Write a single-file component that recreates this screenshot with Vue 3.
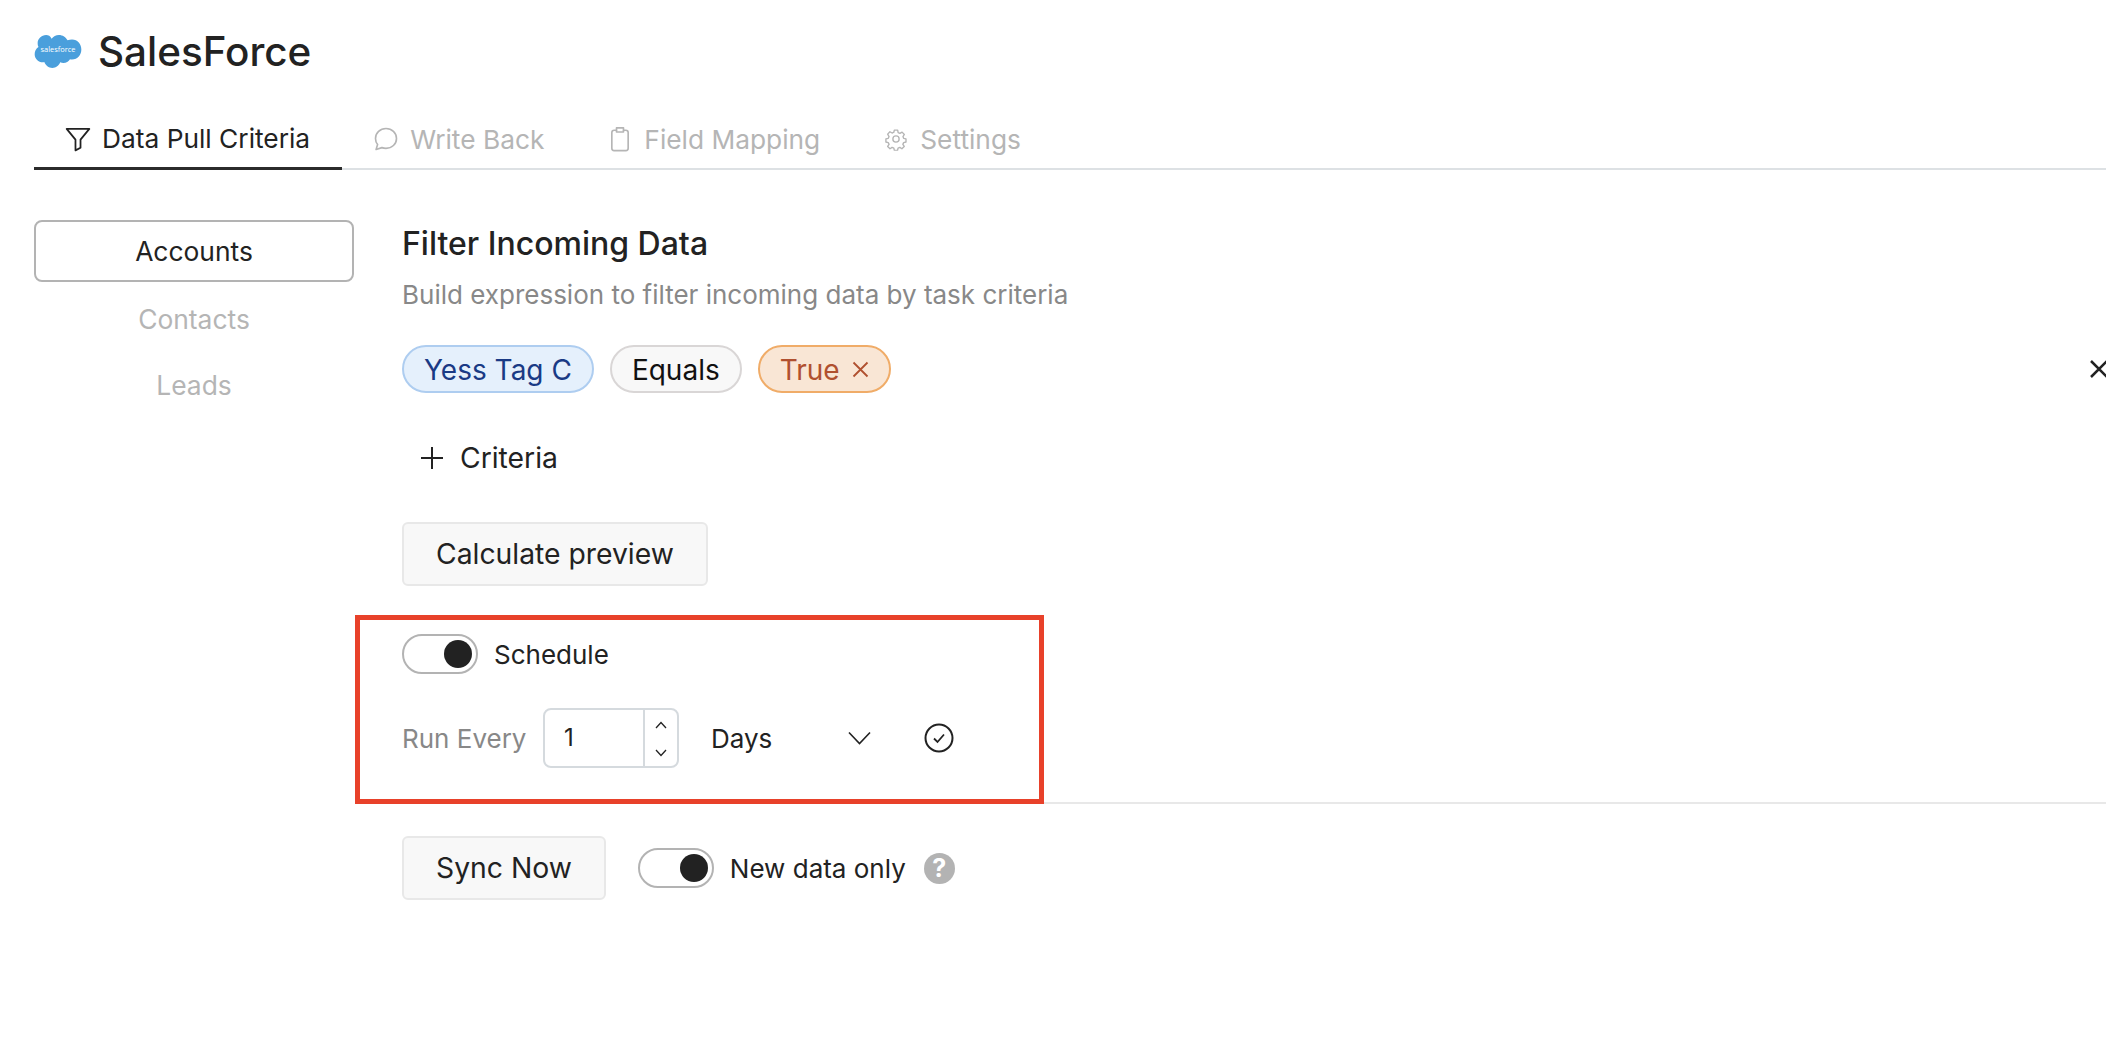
<template>
  <div class="page">
    <header class="header">
      <svg class="logo" viewBox="3.500 1 45 33" width="48" height="35">
        <path fill="#4a9fdc" d="M20 5.500C21.600 3.400 24 2 26.800 2c3.600 0 6.700 2.100 8.200 5 1.300-.6 2.700-.9 4.200-.9C44.600 6.100 48 10.500 48 15.500S44.600 25 39.200 25c-.7 0-1.300-.1-1.900-.2-1.200 2.200-3.600 3.600-6.200 3.600-1.100 0-2.100-.2-3-.7-1.200 3-4 5.300-7.400 5.300-3.500 0-6.500-2.300-7.600-5.500-.5.1-1 .2-1.500.2C7.600 27.700 4 24.300 4 20c0-2.800 1.400-5.300 3.600-6.700C7 12.200 6.800 11 6.800 9.800 6.800 5.500 10.400 2 14.800 2c2.100 0 4 .9 5.200 3.500z"/>
        <text x="26" y="18" text-anchor="middle" class="logo-text">salesforce</text>
      </svg>
      <h1>SalesForce</h1>
    </header>

    <nav class="tabs">
      <div v-for="t in tabs" :key="t.name" class="tab" :class="{ active: t.active }">
        <svg width="28" height="28" viewBox="0 0 24 24" fill="none" stroke="currentColor" stroke-width="1.400" stroke-linejoin="round" stroke-linecap="round">
          <path v-for="d in t.icon" :key="d" :d="d" />
        </svg>
        <span>{{ t.name }}</span>
      </div>
    </nav>

    <div class="body">
      <aside class="side">
        <div class="side-item selected">Accounts</div>
        <div class="side-item">Contacts</div>
        <div class="side-item">Leads</div>
      </aside>

      <main class="main">
        <h2>Filter Incoming Data</h2>
        <p class="sub">Build expression to filter incoming data by task criteria</p>

        <div class="chips">
          <span class="chip blue">Yess Tag C</span>
          <span class="chip grey">Equals</span>
          <span class="chip orange">True
            <svg width="17" height="17" viewBox="0 0 17 17" fill="none" stroke="currentColor" stroke-width="1.800"><path d="M1.500 1.500l14 14M15.500 1.500l-14 14" /></svg>
          </span>
          <svg class="row-close" width="18" height="18" viewBox="0 0 18 18" fill="none" stroke="#222" stroke-width="2.500"><path d="M1 1l16 16M17 1L1 17" /></svg>
        </div>

        <div class="add">
          <svg width="24" height="24" viewBox="0 0 24 24" fill="none" stroke="#222" stroke-width="2"><path d="M12 1v22M1 12h22" /></svg>
          <span>Criteria</span>
        </div>

        <button class="btn">Calculate preview</button>

        <div class="schedule">
          <div class="toggle-row">
            <span class="toggle"><i></i></span>
            <span class="sch-label">Schedule</span>
          </div>
          <div class="run-row">
            <span class="run-label">Run Every</span>
            <div class="stepper">
              <span class="num">1</span>
              <div class="arrows">
                <svg width="14" height="8" viewBox="0 0 14 8" fill="none" stroke="#222" stroke-width="1.300"><path d="M2 7l5-5.500L12 7" /></svg>
                <svg width="14" height="8" viewBox="0 0 14 8" fill="none" stroke="#222" stroke-width="1.300"><path d="M2 1l5 5.500L12 1" /></svg>
              </div>
            </div>
            <div class="select">
              <span>Days</span>
              <svg width="23" height="14" viewBox="0 0 23 14" fill="none" stroke="#222" stroke-width="1.600"><path d="M1 1.500l10.500 11 10.500-11" /></svg>
            </div>
            <svg class="check" width="30" height="30" viewBox="0 0 30 30" fill="none" stroke="#222" stroke-width="2"><circle cx="15" cy="15" r="13.500" /><path d="M10 15.500l3.500 3.500 6.500-7.500" stroke-width="1.800" /></svg>
          </div>
        </div>

        <div class="sync-row">
          <button class="btn">Sync Now</button>
          <span class="toggle"><i></i></span>
          <span class="sch-label big">New data only</span>
          <span class="help">?</span>
        </div>

        <div class="redbox"></div>
      </main>
    </div>
  </div>
</template>

<script setup>
const tabs = [
  { name: 'Data Pull Criteria', active: true, icon: ['M3 4h18l-7 8.500V19l-4 2v-8.500z'] },
  { name: 'Write Back', icon: ['M12 3c5 0 9 3.600 9 8.500S17 20 12 20c-1.200 0-2.400-.2-3.500-.6L3.500 21l1.300-4.300C3.600 15.300 3 13.500 3 11.500 3 6.600 7 3 12 3z'] },
  { name: 'Field Mapping', icon: ['M9 4.500H7a2 2 0 0 0-2 2V20a2 2 0 0 0 2 2h10a2 2 0 0 0 2-2V6.500a2 2 0 0 0-2-2h-2', 'M9 2.500h6v3.500H9z'] },
  { name: 'Settings', icon: ['M12 15.200a3.200 3.200 0 1 0 0-6.400 3.200 3.200 0 0 0 0 6.400z', 'M10.300 3h3.400l.5 2.500 1.800.8 2.200-1.300 2.300 2.400-1.400 2.100.7 1.800 2.400.6v3.200l-2.400.6-.8 1.800 1.400 2.100-2.400 2.300-2.100-1.400-1.800.8-.5 2.400h-3.300l-.5-2.400-1.800-.8-2.100 1.400-2.400-2.300 1.400-2.100-.8-1.800-2.400-.6v-3.200l2.400-.6.800-1.800L3.500 7l2.300-2.400L8 5.900l1.800-.8z'] }
]
</script>

<style>
html, body { margin: 0; background: #fff; overflow: hidden; }
</style>

<style scoped>
.page { width: 2106px; height: 1064px; overflow: hidden; font-family: Inter, "Liberation Sans", sans-serif; color: #222; font-size: 26.400px; box-sizing: border-box; }
.header { display: flex; align-items: center; gap: 16px; padding: 27px 0 0 34px; height: 48px; }
.logo-text { fill: #fff; font-size: 7px; font-family: "Open Sans", sans-serif; }
h1 { margin: 0; font-size: 40.400px; font-weight: 500; }
.tabs { display: flex; margin: 39px 0 0 34px; border-bottom: 2px solid #dde1e4; height: 54px; font-size: 26.300px; }
.tab { display: flex; align-items: center; gap: 12px; padding: 0 32px 4px 28px; box-sizing: border-box; color: #b5b5b5; margin-bottom: -2px; border-bottom: 2px solid transparent; }
.tab svg { transform: translateX(2px); }
.tab.active { color: #222; border-bottom: 3px solid #2b2b2b; }
.tab.active svg { transform: translateX(2px) scale(1.08); }
.tab:last-child svg { transform: translateX(2px) scale(.84); }
.body { display: flex; padding: 50px 0 0 34px; }
.side { width: 320px; margin-right: 48px; flex: none; }
.side-item { height: 62px; margin-bottom: 4px; display: flex; align-items: center; justify-content: center; color: #b5b5b5; box-sizing: border-box; }
.side-item.selected { color: #222; border: 2px solid #b3b3b3; border-radius: 8px; margin-bottom: 6px; }
.main { flex: 1; position: relative; min-width: 0; }
h2 { margin: 2px 0 0; font-size: 32px; font-weight: 480; line-height: 44px; }
.sub { margin: 11px 0 0; color: #888; line-height: 36px; font-size: 26px; }
.chips { display: flex; align-items: center; gap: 16px; margin-top: 32px; height: 48px; position: relative; }
.chip { height: 48px; box-sizing: border-box; border-radius: 24px; padding: 1px 20px 0; display: flex; align-items: center; gap: 12px; font-size: 28px; border: 2px solid; }
.blue { background: #e5f0fc; border-color: #aecdf0; color: #1a3a85; }
.grey { background: #f8f8f8; border-color: #d9d6d6; color: #111; }
.orange { background: #f9e6d5; border-color: #f0ac68; color: #b0502f; }
.row-close { position: absolute; left: 1688px; top: 15px; }
.add { display: flex; align-items: center; gap: 16px; margin: 43px 0 0 18px; height: 44px; font-size: 28.300px; }
.btn { display: block; height: 64px; padding: 0 32px; background: #f8f8f8; border: 2px solid #e8e8e8; border-radius: 6px; font: inherit; font-size: 28.300px; color: #222; }
.main > .btn { margin-top: 42px; }
.schedule { margin-top: 48px; height: 168px; border-bottom: 2px solid #e8e8e8; }
.toggle-row { display: flex; align-items: center; gap: 16px; }
.toggle { display: inline-block; flex: none; width: 76px; height: 40px; box-sizing: border-box; border: 2px solid #b3b3b3; border-radius: 20px; position: relative; }
.toggle i { position: absolute; right: 4px; top: 4px; width: 28px; height: 28px; border-radius: 50%; background: #222; }
.sch-label { font-size: 26px; }
.run-row { display: flex; align-items: center; margin-top: 34px; }
.run-label { color: #888; width: 141px; font-size: 26px; }
.stepper { display: flex; width: 136px; height: 60px; box-sizing: border-box; border: 2px solid #d5dade; border-radius: 8px; }
.num { flex: 1; padding-left: 19px; line-height: 56px; font-size: 24px; }
.arrows { width: 34px; border-left: 2px solid #d5dade; display: flex; flex-direction: column; justify-content: space-between; align-items: center; padding: 11px 0 9px; box-sizing: border-box; }
.select { display: flex; align-items: center; justify-content: space-between; width: 160px; margin-left: 32px; font-size: 26px; }
.check { margin-left: 53px; }
.sync-row { display: flex; align-items: center; margin-top: 32px; }
.sync-row .toggle { margin-left: 32px; }
.big { margin-left: 16px; }
.help { margin-left: 18px; width: 31px; height: 31px; border-radius: 50%; background: #b3b3b3; color: #fff; font-size: 25px; font-weight: 700; display: flex; align-items: center; justify-content: center; }
.redbox { position: absolute; left: -47px; top: 395px; width: 689px; height: 189px; box-sizing: border-box; border: 5px solid #e8412a; }
</style>
